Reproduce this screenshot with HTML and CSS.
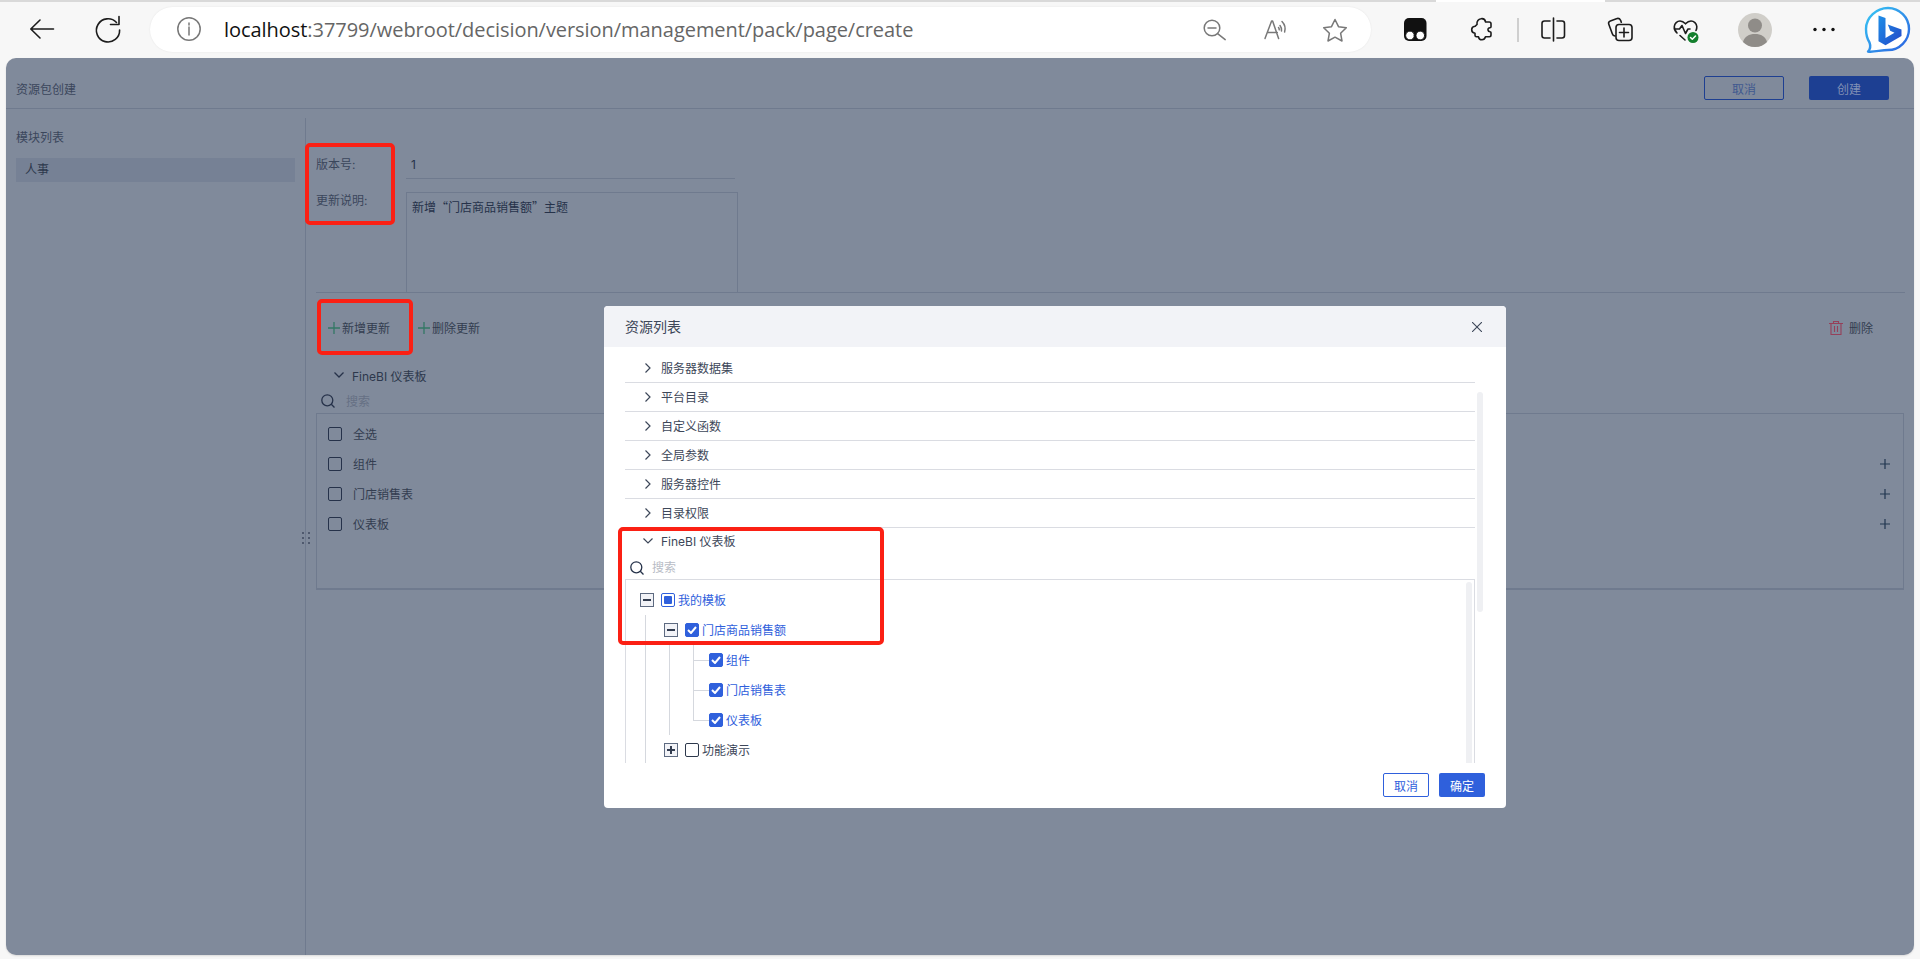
FILE: index.html
```html
<!DOCTYPE html>
<html lang="zh-CN">
<head>
<meta charset="utf-8">
<title>资源包创建</title>
<link rel="stylesheet" href="styles.css">
</head>
<body>
<div class="tabstrip"><span class="strip-line strip-a"></span><span class="strip-gap"></span><span class="strip-line strip-b"></span></div>
<div class="toolbar">
  <svg class="ic ic-back" width="36" height="30" viewBox="24 15 36 30"><path d="M53.5 29H31M40 20l-9.2 9 9.2 9"/></svg>
  <svg class="ic ic-reload" width="36" height="30" viewBox="90 15 36 30"><path d="M116.5 22.5A11.6 11.6 0 1 0 119.6 30"/><path d="M110.5 24.5h8.5V16.5"/></svg>
  <div class="address">
    <svg class="ic ic-info gray" width="28" height="30" viewBox="176 15 28 30"><circle cx="189" cy="29" r="11.2"/><path d="M189 27v8M189 23v2"/></svg>
    <div class="url"><span class="url-host">localhost</span>:37799/webroot/decision/version/management/pack/page/create</div>
    <svg class="ic ic-zoom gray" width="30" height="30" viewBox="1200 15 30 30"><circle cx="1212" cy="28" r="7.8"/><path d="M1217.6 33.6l7.6 6M1208 28h8"/></svg>
    <svg class="ic ic-read gray" width="28" height="30" viewBox="1262 15 28 30"><path d="M1265 38.5l6.6-17.5h1l6 17.5M1267.3 32.5h10"/><path d="M1280 25.5c1.300 1.600 1.800 3.400 1.500 5.500M1282 21.500c2.700 2.800 3.700 6.700 2.600 10.500M1278.500 27.500c.6.700.8 1.500.7 2.300"/></svg>
    <svg class="ic ic-star gray" width="28" height="30" viewBox="1321 15 28 30"><path d="M1335 19.500l3.500 7.200 7.800 1-5.700 5.500 1.400 7.800-7-3.800-7 3.800 1.400-7.800-5.700-5.500 7.800-1z"/></svg>
  </div>
  <svg class="ic ic-tamper" width="30" height="30" viewBox="1400 15 30 30"><rect class="solid" x="1404" y="18" width="22.500" height="23" rx="5"/><circle class="eye" cx="1410" cy="35.500" r="4.300"/><circle class="eye" cx="1420.300" cy="35.500" r="4.300"/></svg>
  <svg class="ic ic-puzzle" width="28" height="30" viewBox="1468 15 28 30"><path d="M1477 24.500c-.5-3.500 1.500-5.500 4-5.800 2.800-.4 4.300 1.500 4.600 3.300h3.700c1.300 0 1.700.8 1.700 1.800v3c0 .6-.3 1-1 1-1.600 0-2.200 1-2 2.200.2 1.200 1 1.800 2 1.800.7 0 1 .4 1 1v2.300c0 1-.6 1.700-1.700 1.700h-3.800c-.5 1.800-1.500 3-3.500 3s-3.300-1.300-3.500-3h-2c-1 0-1.500-.7-1.500-1.500v-2c-2-.3-3.300-1.600-3.300-3.500 0-2 1.300-3.300 3.300-3.500z"/></svg>
  <span class="tb-sep"></span>
  <svg class="ic ic-split" width="28" height="30" viewBox="1540 15 28 30"><path d="M1550 21h-5.500c-1.500 0-2.500 1-2.500 2.500v12c0 1.500 1 2.500 2.500 2.500h5.500M1557 21h5c1.500 0 2.500 1 2.500 2.500v12c0 1.500-1 2.500-2.500 2.500h-5M1553.500 18v23"/></svg>
  <svg class="ic ic-collect" width="28" height="30" viewBox="1606 15 28 30"><path d="M1615 36c-1.200-.2-2.300-1-2.700-2.300l-3.500-9.500c-.5-1.400.2-2.800 1.600-3.300l6-2.200c1.700-.6 3.300-.2 4.200 1.600l.7 2"/><rect x="1616" y="24.500" width="16" height="16" rx="3"/><path d="M1624 28v9M1619.500 32.500h9"/></svg>
  <svg class="ic ic-heart" width="28" height="30" viewBox="1672 15 28 30"><path d="M1677 33c-2-2-3-4-2.700-6.500.3-3 2.800-5.500 5.700-5.500 2 0 3.800 1 5.500 2.800 1.700-1.800 3.500-2.800 5.500-2.800 3 0 5.500 2.500 5.800 5.500.1 1.500-.2 2.800-.8 4"/><path d="M1674.500 29h5l2.500-3.500 3.500 8 2.500-4.500h2M1680 35.500l5 4.500"/><circle class="green" cx="1693" cy="37.500" r="5.500"/><path class="tick" d="M1690.500 37.500l1.800 1.800 3.200-3.300"/></svg>
  <svg class="ic ic-avatar" width="38" height="40" viewBox="1736 10 38 40"><circle class="avatar-bg" cx="1755" cy="30" r="17"/><circle class="avatar-fg" cx="1755" cy="25.500" r="7"/><path class="avatar-fg" d="M1743 42c1.500-5.500 6-8 12-8s10.500 2.500 12 8c-3 3-7 5-12 5s-9-2-12-5z"/></svg>
  <svg class="ic ic-dots" width="24" height="30" viewBox="1812 15 24 30"><circle class="solid" cx="1815" cy="29.500" r="1.700"/><circle class="solid" cx="1824" cy="29.500" r="1.700"/><circle class="solid" cx="1833" cy="29.500" r="1.700"/></svg>
  <svg class="ic ic-bing" width="50" height="50" viewBox="1862 5 50 50">
    <defs><linearGradient id="bg1" x1="0" y1="0" x2="1" y2="1"><stop offset="0" stop-color="#38c8f4"/><stop offset="1" stop-color="#2a5fe0"/></linearGradient>
    <linearGradient id="bg2" x1="0" y1="0" x2="1" y2="1"><stop offset="0" stop-color="#1d8fe8"/><stop offset="1" stop-color="#2548c8"/></linearGradient></defs>
    <path class="bing-ring" d="M1888 8c11.500 0 21 9.500 21 21s-9.500 21-21 21c-7 0-15 2.500-20 1.500 2-2 2.800-5.500 1.500-9-2.300-3.700-3.500-8-3.500-13.500 0-11.500 10.500-21 22-21z"/>
    <path class="bing-b" d="M1878.500 15.500l7 2.500v20l9-5.200-4.300-2-2.400-6.300 13.700 5v6.500l-16 9.200-7-4z"/>
  </svg>
</div>

<div class="page">
  <header class="page-head">
    <span class="page-title">资源包创建</span>
    <div class="head-actions"><button class="btn-outline dim">取消</button><button class="btn-solid dim">创建</button></div>
  </header>
  <div class="page-body">
    <aside class="sidebar">
      <div class="side-title">模块列表</div>
      <div class="side-item">人事</div>
    </aside>
    <main class="main">
      <svg class="grip" width="8" height="12" viewBox="0 0 8 12"><path d="M1 0v2M1 5v2M1 10v2M7 0v2M7 5v2M7 10v2"/></svg>
      <div class="form-row">
        <label class="form-label">版本号:</label>
        <div class="form-value">1</div>
      </div>
      <div class="form-row form-row-desc">
        <label class="form-label">更新说明:</label>
        <div class="form-area">新增“门店商品销售额”主题</div>
      </div>
      <div class="actions">
        <span class="act"><svg class="plus-green" width="12" height="12" viewBox="0 0 12 12"><path d="M6 0v12M0 6h12"/></svg>新增更新</span>
        <span class="act"><svg class="plus-green" width="12" height="12" viewBox="0 0 12 12"><path d="M6 0v12M0 6h12"/></svg>删除更新</span>
        <span class="act act-del"><svg class="trash" width="14" height="14" viewBox="0 0 14 14"><path d="M0 2.500h14M4.500 2.500V.5h5v2M2 2.500V13.500h10V2.500M5.500 5v6M8.500 5v6"/></svg>删除</span>
      </div>
      <div class="sec-head"><svg class="chev" width="10" height="6" viewBox="0 0 10 6"><path d="M.5.500l4.500 4.500 4.500-4.500"/></svg>FineBI 仪表板</div>
      <div class="search-row"><svg class="search" width="14" height="14" viewBox="0 0 14 14"><circle cx="6.300" cy="6.300" r="5.500"/><path d="M10.300 10.300l3.200 3.200"/></svg><span class="placeholder">搜索</span></div>
      <div class="check-box">
        <div class="check-row"><span class="cb"></span><span class="t">全选</span></div>
        <div class="check-row"><span class="cb"></span><span class="t">组件</span><svg class="plus-dark" width="10" height="10" viewBox="0 0 10 10"><path d="M5 0v10M0 5h10"/></svg></div>
        <div class="check-row"><span class="cb"></span><span class="t">门店销售表</span><svg class="plus-dark" width="10" height="10" viewBox="0 0 10 10"><path d="M5 0v10M0 5h10"/></svg></div>
        <div class="check-row"><span class="cb"></span><span class="t">仪表板</span><svg class="plus-dark" width="10" height="10" viewBox="0 0 10 10"><path d="M5 0v10M0 5h10"/></svg></div>
      </div>
    </main>
  </div>
</div>

<section class="modal">
  <div class="modal-head">
    <span class="t">资源列表</span>
    <svg class="close" width="10" height="10" viewBox="0 0 10 10"><path d="M0 0l10 10M10 0L0 10"/></svg>
  </div>
  <div class="modal-body">
    <div class="res-row"><svg class="chev-r" width="6" height="10" viewBox="0 0 6 10"><path d="M.5.500l4.500 4.500-4.500 4.500"/></svg><span class="t">服务器数据集</span></div>
    <div class="res-row"><svg class="chev-r" width="6" height="10" viewBox="0 0 6 10"><path d="M.5.500l4.500 4.500-4.500 4.500"/></svg><span class="t">平台目录</span></div>
    <div class="res-row"><svg class="chev-r" width="6" height="10" viewBox="0 0 6 10"><path d="M.5.500l4.500 4.500-4.500 4.500"/></svg><span class="t">自定义函数</span></div>
    <div class="res-row"><svg class="chev-r" width="6" height="10" viewBox="0 0 6 10"><path d="M.5.500l4.500 4.500-4.500 4.500"/></svg><span class="t">全局参数</span></div>
    <div class="res-row"><svg class="chev-r" width="6" height="10" viewBox="0 0 6 10"><path d="M.5.500l4.500 4.500-4.500 4.500"/></svg><span class="t">服务器控件</span></div>
    <div class="res-row"><svg class="chev-r" width="6" height="10" viewBox="0 0 6 10"><path d="M.5.500l4.500 4.500-4.500 4.500"/></svg><span class="t">目录权限</span></div>
    <div class="res-open"><svg class="chev-m" width="10" height="6" viewBox="0 0 10 6"><path d="M.5.500l4.500 4.500 4.500-4.500"/></svg><span class="t">FineBI 仪表板</span></div>
    <div class="res-search"><svg class="search" width="14" height="14" viewBox="0 0 14 14"><circle cx="6.300" cy="6.300" r="5.500"/><path d="M10.300 10.300l3.200 3.200"/></svg><span class="placeholder-m t">搜索</span></div>
    <div class="tree">
      <div class="node node-0 on"><span class="exp"><i class="bar-h"></i></span><span class="tcb half"><i></i></span><span class="t">我的模板</span></div>
      <div class="group-0">
        <div class="node node-1 on"><span class="exp"><i class="bar-h"></i></span><span class="tcb checked"><svg width="10" height="8" viewBox="0 0 10 8"><path d="M1 4l3 3 5-6"/></svg></span><span class="t">门店商品销售额</span></div>
        <div class="group-1">
          <div class="node node-2 on"><span class="tcb checked"><svg width="10" height="8" viewBox="0 0 10 8"><path d="M1 4l3 3 5-6"/></svg></span><span class="t">组件</span></div>
          <div class="node node-2 on"><span class="tcb checked"><svg width="10" height="8" viewBox="0 0 10 8"><path d="M1 4l3 3 5-6"/></svg></span><span class="t">门店销售表</span></div>
          <div class="node node-2 on"><span class="tcb checked"><svg width="10" height="8" viewBox="0 0 10 8"><path d="M1 4l3 3 5-6"/></svg></span><span class="t">仪表板</span></div>
        </div>
        <div class="node node-1"><span class="exp"><i class="bar-h"></i><i class="bar-v"></i></span><span class="tcb"></span><span class="t">功能演示</span></div>
      </div>
    </div>
    <span class="scroll scroll-outer"></span>
    <span class="scroll scroll-inner"></span>
  </div>
  <div class="modal-foot">
    <button class="btn-m-outline">取消</button>
    <button class="btn-m-solid">确定</button>
  </div>
</section>

<div class="mark mark-form"></div>
<div class="mark mark-add"></div>
<div class="mark mark-tree"></div>
</body>
</html>
```
FILE: styles.css
```css
* { box-sizing: border-box; }
html, body { margin: 0; height: 100%; }
body {
  width: 1920px; height: 959px; overflow: hidden; position: relative;
  background: #f7f7f7; display: flex; flex-direction: column;
  font-family: "Inter", "Noto Sans CJK SC", sans-serif; font-size: 12px; color: #333d50;
}
button { font: inherit; padding: 0; cursor: pointer; }
.t { margin-top: -2px; }

/* browser chrome */
.tabstrip { display: flex; height: 2px; flex: none; }
.strip-line { background: #d9d9d9; }
.strip-a { width: 1436px; }
.strip-gap { width: 169px; background: #fff; }
.strip-b { flex: 1; }
.toolbar { display: flex; align-items: center; height: 56px; flex: none; }
.ic { flex: none; display: block; fill: none; stroke: #1c1c1c; stroke-width: 1.6; stroke-linecap: round; stroke-linejoin: round; }
.ic.gray { stroke: #787878; stroke-width: 1.500; }
.ic .solid { fill: #111; stroke: none; }
.ic .eye { fill: #fff; stroke: #111; stroke-width: .8; }
.ic-back { margin-left: 24px; }
.ic-reload { margin-left: 30px; }
.address {
  margin-left: 24px; width: 1221px; height: 45px; flex: none; align-self: flex-start; margin-top: 5px;
  background: #fff; border-radius: 23px; display: flex; align-items: center; padding-right: 22px;
  box-shadow: 0 0 2px rgba(0,0,0,.08);
}
.ic-info { margin-left: 26px; }
.url { margin-left: 20px; font-family: "Open Sans", sans-serif; font-size: 20px; color: #666; white-space: nowrap; letter-spacing: -.05px; }
.url-host { color: #111; }
.ic-zoom { margin-left: auto; }
.ic-read { margin-left: 32px; }
.ic-star { margin-left: 31px; }
.ic-tamper { margin-left: 29px; }
.ic-puzzle { margin-left: 38px; }
.tb-sep { margin-left: 21px; width: 2px; height: 24px; background: #cfcfcf; flex: none; }
.ic-split { margin-left: 21px; }
.ic-collect { margin-left: 38px; }
.ic-heart { margin-left: 38px; }
.ic .green { fill: #14802e; stroke: none; }
.ic .tick { stroke: #fff; stroke-width: 1.500; }
.ic-avatar { margin-left: 36px; }
.ic .avatar-bg { fill: #d0cec9; stroke: none; }
.ic .avatar-fg { fill: #8f8c88; stroke: none; }
.ic-dots { margin-left: 38px; }
.ic-bing { margin-left: 26px; }
.ic .bing-ring { fill: #fff; stroke: url(#bg1); stroke-width: 2.4; }
.ic .bing-b { fill: url(#bg2); stroke: none; }

/* dimmed page */
.page {
  flex: none; height: 897px; margin: 0 6px; background: #808a9b;
  border-radius: 10px; display: flex; flex-direction: column;
  box-shadow: 0 1px 2px rgba(0,0,0,.12);
}
.page-head {
  height: 51px; flex: none; display: flex; align-items: center; justify-content: space-between;
  padding: 10px 25px 0 10px; border-bottom: 1px solid #6f7a8e;
}
.page-title { color: #3b465b; }
.head-actions { display: flex; gap: 25px; }
.btn-outline.dim { width: 80px; height: 24px; background: none; border: 1px solid #1e3f91; color: #41598f; border-radius: 2px; }
.btn-solid.dim { width: 80px; height: 24px; border: 0; background: #1d3f92; color: #8190b5; border-radius: 2px; }
.page-body { flex: 1; display: flex; min-height: 0; }
.sidebar { width: 299px; flex: none; padding: 17px 10px 0; }
.side-title { height: 24px; line-height: 24px; color: #3b465b; }
.side-item { margin-top: 8px; height: 24px; line-height: 24px; padding-left: 9px; background: #768195; color: #2d384c; }
.main { flex: 1; margin-top: 9px; border-left: 1px solid #6f7a8e; padding: 35px 0 0 10px; position: relative; min-width: 0; }
.grip { position: absolute; left: -4px; top: 414px; fill: none; stroke: #2f3a50; stroke-width: 1.200; }
.form-row { display: flex; }
.form-label { width: 90px; flex: none; height: 24px; line-height: 24px; color: #3b465b; }
.form-value { width: 329px; height: 26px; line-height: 24px; padding-left: 5px; border-bottom: 1px solid #6f7a8e; color: #26324a; }
.form-row-desc { margin-top: 13px; }
.form-row-desc .form-label { height: 18px; line-height: 17px; }
.form-area { width: 332px; height: 100px; padding: 5px; line-height: 18px; border: 1px solid #6f7a8e; border-bottom: 0; color: #26324a; font-family: "Noto Sans CJK SC", sans-serif; }
.actions { height: 70px; border-top: 1px solid #6f7a8e; padding: 0 32px 0 12px; margin-right: 9px; display: flex; align-items: center; gap: 28px; color: #333d50; }
.act { display: flex; align-items: center; gap: 2px; }
.act-del { margin-left: auto; gap: 6px; }
.plus-green { fill: none; stroke: #337866; stroke-width: 1.300; }
.trash { fill: none; stroke: #95405a; stroke-width: 1.100; }
.sec-head { height: 26px; display: flex; align-items: center; gap: 8px; padding-left: 18px; color: #2d384c; }
.chev { fill: none; stroke: #26324a; stroke-width: 1.300; }
.search-row { height: 25px; display: flex; align-items: center; gap: 11px; padding-left: 5px; }
.search { fill: none; stroke: #26324a; stroke-width: 1.300; flex: none; }
.placeholder { color: #667084; }
.check-box { margin-right: 10px; height: 177px; padding: 5px 13px 0 11px; border: 1px solid #6f7a8e; border-bottom-width: 2px; }
.check-row { height: 30px; display: flex; align-items: center; gap: 11px; color: #333d50; }
.cb { width: 14px; height: 14px; border: 1px solid #26324a; border-radius: 2px; flex: none; }
.plus-dark { margin-left: auto; fill: none; stroke: #213650; stroke-width: 1.200; }

/* modal */
.modal {
  position: absolute; left: 604px; top: 306px; width: 902px; height: 502px;
  background: #fff; border-radius: 4px; display: flex; flex-direction: column; overflow: hidden;
}
.modal-head {
  height: 41px; flex: none; background: #f2f3f7; display: flex; align-items: center; justify-content: space-between;
  padding: 0 24px 0 21px; font-size: 14px; color: #3d4759;
}
.close { fill: none; stroke: #3d4759; stroke-width: 1.100; }
.modal-body { height: 416px; flex: none; padding: 7px 31px 0 21px; position: relative; color: #3d4759; }
.res-row { height: 29px; display: flex; align-items: center; gap: 10px; padding-left: 20px; border-bottom: 1px solid #dadce2; }
.chev-r, .chev-m { fill: none; stroke: #3d4759; stroke-width: 1.200; flex: none; }
.res-open { height: 26px; display: flex; align-items: center; gap: 8px; padding-left: 18px; }
.res-search { height: 25px; padding: 2px 0 0 5px; display: flex; align-items: center; gap: 8px; }
.placeholder-m { color: #b8bcc5; }
.tree { height: 184px; padding-top: 5px; border: 1px solid #dadce2; border-bottom: 0; overflow: hidden; }
.node { height: 30px; display: flex; align-items: center; position: relative; }
.node.on { color: #2f60dc; }
.node-0 { padding-left: 14px; }
.node-1 { padding-left: 38px; }
.node-2 { padding-left: 83px; }
.exp { width: 14px; height: 14px; flex: none; margin-right: 7px; border: 1px solid #5d6a80; background: #f2f3f7; position: relative; }
.bar-h { position: absolute; left: 2px; right: 2px; top: 5px; height: 2px; background: #333d50; }
.bar-v { position: absolute; top: 2px; bottom: 2px; left: 5px; width: 2px; background: #333d50; }
.tcb { width: 14px; height: 14px; flex: none; margin-right: 3px; border: 1px solid #2d384c; border-radius: 2px; display: flex; align-items: center; justify-content: center; background: #fff; }
.tcb.checked { background: #2f60dc; border-color: #2f60dc; }
.tcb.checked svg { fill: none; stroke: #fff; stroke-width: 2; }
.tcb.half { border-color: #2f60dc; }
.tcb.half i { width: 8px; height: 8px; background: #2f60dc; border-radius: 1px; }
.group-0 { position: relative; }
.group-0::before { content: ""; position: absolute; left: 19px; top: 0; bottom: -100px; width: 1px; background: #d5d8de; }
.group-1 { position: relative; }
.group-1::before { content: ""; position: absolute; left: 43px; top: 0; bottom: 0; width: 1px; background: #d5d8de; }
.group-1::after { content: ""; position: absolute; left: 67px; top: 0; bottom: 15px; width: 1px; background: #d5d8de; }
.node-2::before { content: ""; position: absolute; left: 67px; top: 15px; width: 16px; height: 1px; background: #d5d8de; }
.scroll { position: absolute; width: 6px; background: #eff0f3; border-radius: 3px; }
.scroll-outer { left: 873px; top: 45px; height: 220px; }
.scroll-inner { left: 862px; top: 235px; height: 181px; border-radius: 3px 3px 0 0; }
.modal-foot { flex: 1; display: flex; justify-content: flex-end; gap: 10px; padding: 10px 21px 0 0; }
.btn-m-outline { width: 46px; height: 24px; background: #fff; border: 1px solid #2f60dc; color: #2f60dc; border-radius: 2px; }
.btn-m-solid { width: 46px; height: 24px; background: #2f60dc; border: 0; color: #fff; border-radius: 2px; }

/* red annotation boxes */
.mark { position: absolute; border: 4px solid #fb2014; border-radius: 5px; }
.mark-form { left: 305px; top: 143px; width: 90px; height: 82px; }
.mark-add { left: 317px; top: 299px; width: 96px; height: 56px; }
.mark-tree { left: 618px; top: 527px; width: 266px; height: 118px; }
```
